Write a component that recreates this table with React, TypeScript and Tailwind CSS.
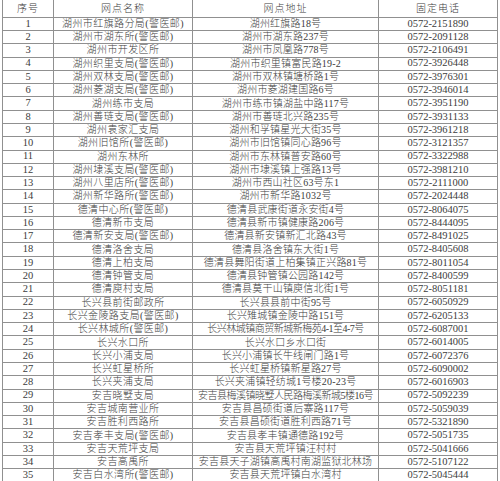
import React from 'react';

type Row = [string, string, string];

const rows: Row[] = [
  ['湖州市红旗路分局(警医邮)', '湖州红旗路18号', '0572-2151890'],
  ['湖州市湖东所(警医邮)', '湖州市湖东路237号', '0572-2091128'],
  ['湖州市开发区所', '湖州市凤凰路778号', '0572-2106491'],
  ['湖州织里支局(警医邮)', '湖州市织里镇富民路19-2', '0572-3926448'],
  ['湖州双林支局(警医邮)', '湖州市双林镇塘桥路1号', '0572-3976301'],
  ['湖州菱湖支局(警医邮)', '湖州市菱湖建国路6号', '0572-3946014'],
  ['湖州练市支局', '湖州市练市镇湖盐中路117号', '0572-3951190'],
  ['湖州善琏支局(警医邮)', '湖州市善琏北兴路235号', '0572-3931133'],
  ['湖州袁家汇支局', '湖州和孚镇星光大街35号', '0572-3961218'],
  ['湖州旧馆所(警医邮)', '湖州市旧馆镇同心路96号', '0572-3121357'],
  ['湖州东林所', '湖州市东林镇普安路60号', '0572-3322988'],
  ['湖州埭溪支局(警医邮)', '湖州市埭溪镇上强路13号', '0572-3981210'],
  ['湖州八里店所(警医邮)', '湖州市西山社区63号东1', '0572-2111000'],
  ['湖州新华路所(警医邮)', '湖州市新华路1032号', '0572-2024448'],
  ['德清中心所(警医邮)', '德清县武康街道永安街4号', '0572-8064075'],
  ['德清新市支局', '德清县新市镇健康路206号', '0572-8444095'],
  ['德清新安支局(警医邮)', '德清县新安镇新汇北路43号', '0572-8491025'],
  ['德清洛舍支局', '德清县洛舍镇东大街1号', '0572-8405608'],
  ['德清上柏支局', '德清县舞阳街道上柏集镇正兴路81号', '0572-8011054'],
  ['德清钟管支局', '德清县钟管镇公园路142号', '0572-8400599'],
  ['德清庾村支局', '德清县莫干山镇庾信北街1号', '0572-8051181'],
  ['长兴县前街邮政所', '长兴县县前中街95号', '0572-6050929'],
  ['长兴金陵路支局(警医邮)', '长兴雉城镇金陵中路151号', '0572-6205133'],
  ['长兴林城所(警医邮)', '长兴林城镇商贸新城新梅苑4-1至4-7号', '0572-6087001'],
  ['长兴水口所', '长兴水口乡水口街', '0572-6014005'],
  ['长兴小浦支局', '长兴小浦镇长牛线闸门路1号', '0572-6072376'],
  ['长兴虹星桥所', '长兴虹星桥镇新星路27号', '0572-6090002'],
  ['长兴夹浦支局', '长兴夹浦镇轻纺城1号楼20-23号', '0572-6016903'],
  ['安吉晓墅支局', '安吉县梅溪镇晓墅人民路梅溪新城5楼16号', '0572-5092239'],
  ['安吉城南营业所', '安吉县昌硕街道后寨路117号', '0572-5059039'],
  ['安吉胜利西路所', '安吉县昌硕街道胜利西路71号', '0572-5321890'],
  ['安吉孝丰支局(警医邮)', '安吉县孝丰镇通德路192号', '0572-5051735'],
  ['安吉天荒坪支局', '安吉县天荒坪镇汪村村', '0572-5041666'],
  ['安吉高禹所', '安吉县天子湖镇高禹村南湖监狱北林场', '0572-5107122'],
  ['安吉白水湾所(警医邮)', '安吉县天荒坪镇白水湾村', '0572-5045444'],
];

const cell =
  'flex items-center justify-center whitespace-nowrap overflow-visible border-r border-b border-[#909090] leading-none';

export default function App() {
  return (
    <div
      className="w-[500px] h-[481px] overflow-hidden bg-white text-[#3c3c3c] text-[10px] font-light"
      style={{ fontFamily: '"Liberation Serif", "Noto Sans CJK SC", serif' }}
    >
      <div className="ml-[2px] grid grid-cols-[51px_139px_186px_119px] border-l border-[#909090]">
        <div className={`${cell} h-[17.7px] pt-[2px] tracking-[1px]`}>序号</div>
        <div className={`${cell} h-[17.7px] pt-[2px] tracking-[1px]`}>网点名称</div>
        <div className={`${cell} h-[17.7px] pt-[2px] tracking-[1px]`}>网点地址</div>
        <div className={`${cell} h-[17.7px] pt-[2px] tracking-[1px]`}>固定电话</div>

        {rows.map(([name, addr, tel], i) => (
          <React.Fragment key={i}>
            <div className={`${cell} h-[13.29px] text-[10.5px]`}>{i + 1}</div>
            <div className={`${cell} h-[13.29px] tracking-[0.4px]`}>{name}</div>
            <div className={`${cell} h-[13.29px] ${addr.length > 17 ? 'tracking-[-0.5px]' : 'tracking-[0.2px]'}`}>
              {addr}
            </div>
            <div className={`${cell} h-[13.29px] text-[10.5px]`}>{tel}</div>
          </React.Fragment>
        ))}
      </div>
    </div>
  );
}
